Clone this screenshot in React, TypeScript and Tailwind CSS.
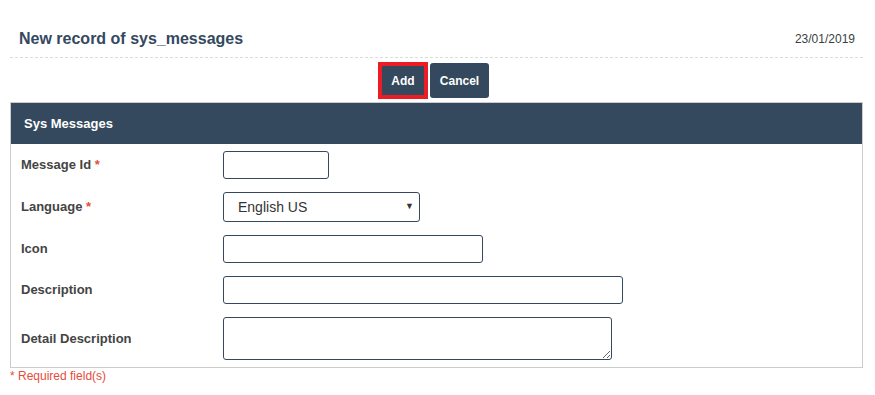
import React from 'react';

const fields = [
  { label: 'Message Id', required: true, kind: 'input', width: 'w-[106px]' },
  { label: 'Language', required: true, kind: 'select', width: 'w-[197px]' },
  { label: 'Icon', required: false, kind: 'input', width: 'w-[260px]' },
  { label: 'Description', required: false, kind: 'input', width: 'w-[400px]' },
  { label: 'Detail Description', required: false, kind: 'textarea', width: 'w-[389px]' },
];

const App: React.FC = () => {
  return (
    <div className="min-h-screen bg-white pl-[10px] pr-[12px] pt-[29px] font-['Liberation_Sans',Arial,sans-serif]">
      <div className="flex items-center justify-between border-b border-dashed border-[#dcdcdc] pl-[9px] pr-[8px] pb-[8px]">
        <h1 className="text-[16px] font-bold leading-[20px] text-[#34495e]">New record of sys_messages</h1>
        <span className="text-[12px] leading-[20px] text-[#3a3f44]">23/01/2019</span>
      </div>

      <div className="mt-[4px] flex items-center justify-center gap-[2px] pr-[6px]">
        <span className="border-4 border-[#ed1c24]">
          <button className="h-[29px] w-[42px] bg-[#34495e] text-[12px] font-bold text-white">Add</button>
        </span>
        <button className="h-[35px] w-[59px] rounded-[3px] bg-[#34495e] text-[12px] font-bold text-white">
          Cancel
        </button>
      </div>

      <div className="mt-[3px] border border-[#cccccc]">
        <div className="flex h-[41px] items-center bg-[#34495e] px-[13px]">
          <span className="text-[13px] font-bold text-white">Sys Messages</span>
        </div>
        <div className="flex flex-col gap-[13px] py-[7px] pl-[10px]">
          {fields.map((f) => (
            <div key={f.label} className="flex items-center">
              <label className="w-[202px] text-[13px] font-bold text-[#444]">
                {f.label}
                {f.required && <span className="text-[#e74c3c]"> *</span>}
              </label>
              {f.kind === 'input' && (
                <input
                  type="text"
                  className={`${f.width} h-[28px] rounded-[3px] border border-[#34495e] bg-white px-2 text-[14px] outline-none`}
                />
              )}
              {f.kind === 'select' && (
                <div className={`${f.width} relative h-[30px]`}>
                  <select
                    defaultValue="en_us"
                    className="h-full w-full appearance-none rounded-[3px] border border-[#34495e] bg-white pl-[14px] text-[14px] text-[#333] outline-none"
                  >
                    <option value="en_us">English US</option>
                  </select>
                  <span className="pointer-events-none absolute right-[6px] top-[8px] text-[9px] text-[#333]">▼</span>
                </div>
              )}
              {f.kind === 'textarea' && (
                <textarea
                  className={`${f.width} block h-[43px] rounded-[3px] border border-[#34495e] bg-white px-2 text-[14px] outline-none`}
                />
              )}
            </div>
          ))}
        </div>
      </div>

      <p className="text-[12px] leading-[16px] text-[#e74c3c]">* Required field(s)</p>
    </div>
  );
};

export default App;
